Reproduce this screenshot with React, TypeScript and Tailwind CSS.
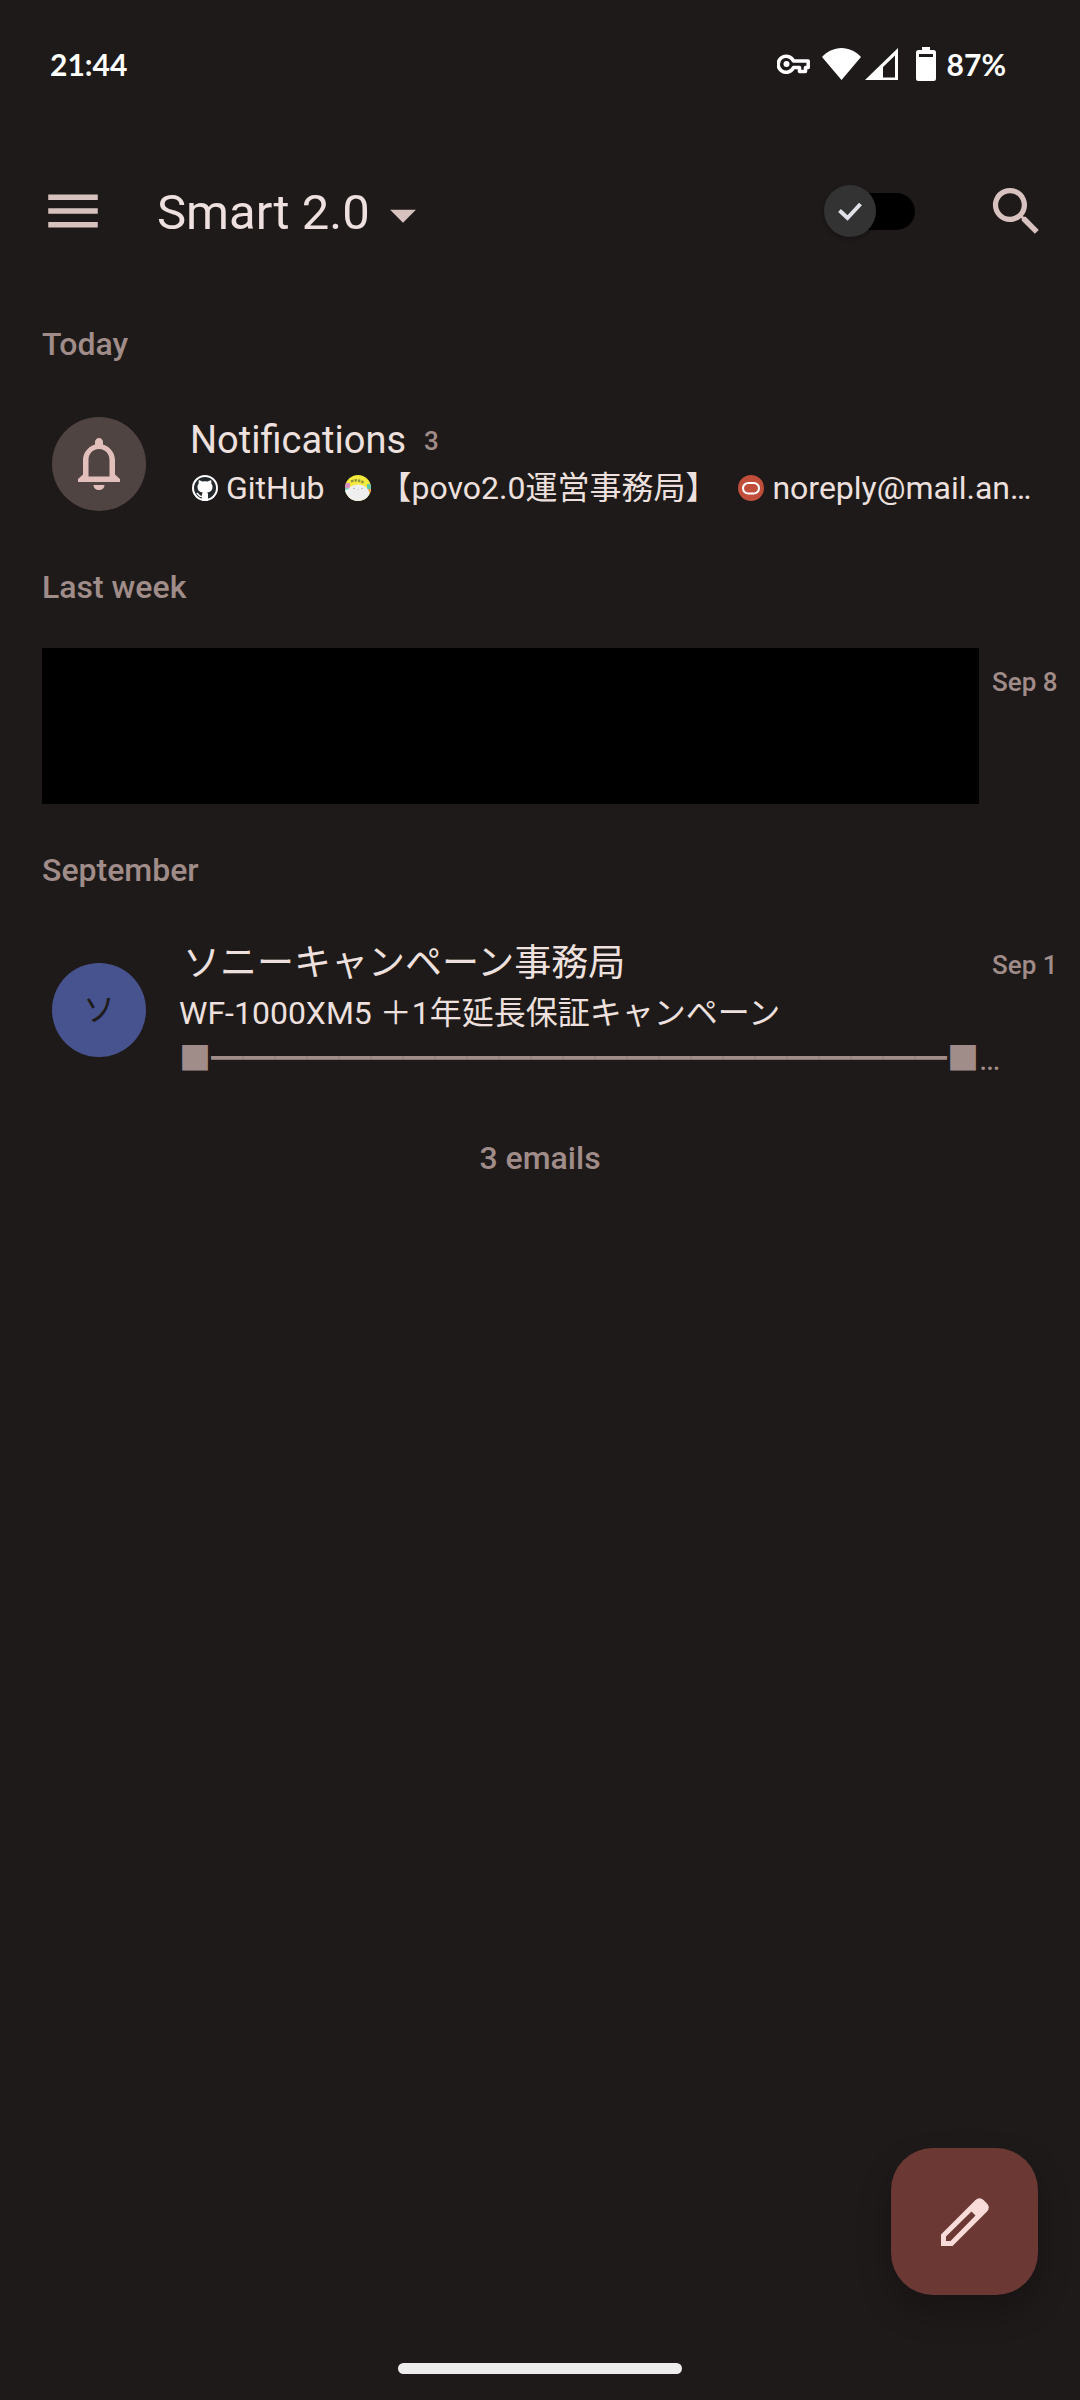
import { useState } from "react";
import type { ReactNode } from "react";
import { MdArrowDropDown, MdMenu, MdSearch } from "react-icons/md";

const SNIPPET = "■" + "━".repeat(23) + "■…";

function StatusBar() {
  return (
    <div className="flex h-32 items-center justify-between pl-[50px] pr-[74px] font-['Lato'] text-[30px] leading-10 font-bold text-white">
      <time>21:44</time>
      <div className="flex items-center">
        <svg className="mr-3 h-5 w-[33px]" viewBox="0 0 33 20" fill="none" stroke="currentColor" aria-label="VPN">
          <path
            strokeWidth="3.500"
            strokeLinejoin="round"
            d="M16.500 7H31.200v6.500h-2.700v4h-6v-4h-6A8 8 0 1 1 16.500 7z"
          />
          <circle cx="9.500" cy="10" r="3" fill="currentColor" stroke="none" />
        </svg>
        <svg className="mr-1 h-8 w-[39px]" viewBox="0 0 39 32" fill="currentColor" aria-label="Wi-Fi">
          <path d="M19.500 32 0 9C5 3.500 12 0 19.500 0S34 3.500 39 9z" />
        </svg>
        <svg className="mr-[18px] h-8 w-[33px]" viewBox="0 0 33 32" fill="currentColor" aria-label="Mobile signal">
          <path fillRule="evenodd" d="M33 0v32H0zM30 7.500 18 19v10.500h12z" />
        </svg>
        <svg className="mr-[11px] h-[34px] w-5" viewBox="0 0 20 34" fill="currentColor" aria-label="Battery">
          <path fillRule="evenodd" d="M6 0h8v3h3.500Q20 3 20 5.500v26Q20 34 17.500 34h-15Q0 34 0 31.500v-26Q0 3 2.500 3H6zM3 7v3h14V7z" />
        </svg>
        <span>87%</span>
      </div>
    </div>
  );
}

function UnreadSwitch() {
  const [on, setOn] = useState(false);
  return (
    <label className="relative flex h-[52px] w-[91px] cursor-pointer items-center justify-end">
      <input
        type="checkbox"
        role="switch"
        aria-label="Show done emails"
        className="peer sr-only"
        checked={on}
        onChange={(e) => setOn(e.target.checked)}
      />
      <span className="h-[37px] w-[74px] rounded-full bg-black" />
      <span className="absolute left-0 flex size-[52px] items-center justify-center rounded-full bg-[#333333] shadow-[0_2px_4px_rgba(0,0,0,0.3)] peer-checked:left-auto peer-checked:right-0">
        <svg className="h-[19px] w-6" viewBox="0 0 24 19" fill="none" stroke="#dfe1e8" strokeWidth="4">
          <path d="M1.500 8.500 9.500 16 22.500 2" />
        </svg>
      </span>
    </label>
  );
}

function TopBar() {
  return (
    <header className="flex h-[166px] items-center pl-10 pr-8 text-[#d8c2bf]">
      <button type="button" aria-label="Open menu">
        <MdMenu className="size-[66px]" />
      </button>
      <button type="button" className="mt-1 ml-[51px] flex items-center gap-[2px] text-[49px] leading-[60px]">
        <span className="text-[#ede0de]">Smart 2.0</span>
        <MdArrowDropDown className="mt-1 size-[62px]" />
      </button>
      <div className="ml-auto flex items-center gap-[70px]">
        <UnreadSwitch />
        <button type="button" aria-label="Search">
          <MdSearch className="size-[63px]" />
        </button>
      </div>
    </header>
  );
}

function SectionTitle({ children }: { children: ReactNode }) {
  return <h2 className="px-[42px] text-[32px] leading-10 font-medium text-[#a08c89]">{children}</h2>;
}

function GitHubAvatar() {
  return (
    <svg className="size-[26px] shrink-0" viewBox="0 0 26 26" aria-hidden="true">
      <circle cx="13" cy="13" r="13" fill="#fff" />
      <circle cx="13" cy="13" r="11" fill="#24292e" />
      <path
        fill="#fff"
        d="M10 26v-6.500c0-.9.300-1.600.800-2.100-3-.400-5.300-1.800-5.300-5.700 0-1.400.500-2.400 1.200-3.200-.200-.900-.200-2 .200-3.200 1.200 0 2.300.600 3.300 1.300a11 11 0 0 1 5.600 0c1-.700 2.100-1.300 3.300-1.300.400 1.200.400 2.300.200 3.200.700.800 1.200 1.800 1.200 3.200 0 3.900-2.300 5.300-5.300 5.700.500.500.800 1.200.800 2.100V26z"
      />
      <path d="M10.500 21.500c-3 .600-3.500-1.300-4.300-2.200-.5-.5-1-.8-1.500-1" fill="none" stroke="#fff" strokeWidth="1.500" />
    </svg>
  );
}

function PovoAvatar() {
  return (
    <svg className="size-[26px] shrink-0" viewBox="0 0 26 26" aria-hidden="true">
      <defs>
        <clipPath id="povo-round">
          <circle cx="13" cy="13" r="13" />
        </clipPath>
      </defs>
      <g clipPath="url(#povo-round)">
        <rect width="26" height="26" fill="#f5ea3c" />
        <rect y="8" width="5" height="5" fill="#d98fc4" />
        <rect y="13" width="5" height="5" fill="#79d3c0" />
        <rect x="22" y="9" width="4" height="5" fill="#5fc6b0" />
        <rect x="22" y="14" width="4" height="4" fill="#f0a04a" />
        <path d="M6 6.500q7-3 13 1.500" stroke="#8f9440" strokeWidth="2.500" strokeDasharray="2.500 1" fill="none" />
        <path d="M2 26C-1 16 5 9.500 13 9.500s14 6.500 11 16.500z" fill="#efefef" />
        <circle cx="2.500" cy="17" r="2.500" fill="#f3f3f3" />
        <circle cx="9" cy="13.500" r=".7" fill="#999" />
        <circle cx="17" cy="13.500" r=".7" fill="#999" />
        <circle cx="13" cy="14.500" r=".5" fill="#aaa" />
      </g>
    </svg>
  );
}

function OracleAvatar() {
  return (
    <svg className="size-[26px] shrink-0" viewBox="0 0 26 26" aria-hidden="true">
      <circle cx="13" cy="13" r="13" fill="#c04e3b" />
      <rect x="5" y="8" width="16" height="10.500" rx="5.250" fill="none" stroke="#fff" strokeWidth="2" />
    </svg>
  );
}

function BellIcon() {
  return (
    <svg className="h-[52px] w-[42px]" viewBox="0 0 42 52" aria-hidden="true">
      <path
        fill="#e2bfbb"
        fillRule="evenodd"
        d="M21 0c2.200 0 4 1.800 4 4v2.500C32 8.500 37 15 37 22v14.500l5 4.500v3H0v-3l5-4.500V22C5 15 10 8.500 17 6.500V4c0-2.200 1.800-4 4-4zM21 11c-6.500 0-10.500 5-10.500 11v16.500h21V22c0-6-4-11-10.500-11zM15.500 47h11c0 3-2.500 5-5.500 5s-5.500-2-5.500-5z"
      />
    </svg>
  );
}

function Sender({ icon, children }: { icon: ReactNode; children: ReactNode }) {
  return (
    <span className="flex shrink-0 items-center gap-2">
      {icon}
      {children}
    </span>
  );
}

export default function App() {
  return (
    <div
      lang="ja"
      className="flex min-h-screen flex-col bg-[#1e1a19] font-['Roboto','Noto_Sans_CJK_JP',sans-serif] text-[#ede0de]"
    >
      <StatusBar />
      <TopBar />

      <main className="flex flex-col pt-[30px]">
        <SectionTitle>Today</SectionTitle>
        <article className="mt-[50px] flex h-[100px] items-center pl-[52px] pr-12">
          <div className="flex size-[94px] shrink-0 items-center justify-center rounded-full bg-[#504442]">
            <BellIcon />
          </div>
          <div className="ml-[44px] min-w-0 flex-1">
            <div className="flex items-center gap-[18px]">
              <h3 className="text-[38px] leading-[48px]">Notifications</h3>
              <span className="mt-[2px] text-[26px] leading-8 font-medium text-[#a08c89]">3</span>
            </div>
            <div className="flex items-center gap-[21px] pl-[2px] text-[32px] leading-[48px] whitespace-nowrap">
              <Sender icon={<GitHubAvatar />}>GitHub</Sender>
              <Sender icon={<PovoAvatar />}>【povo2.0運営事務局】</Sender>
              <Sender icon={<OracleAvatar />}>noreply@mail.an…</Sender>
            </div>
          </div>
        </article>

        <div className="mt-[53px]">
          <SectionTitle>Last week</SectionTitle>
        </div>
        <article className="mt-[41px] flex items-start pl-[42px] pr-[22px]">
          <div className="h-[156px] flex-1 bg-black" />
          <time className="mt-[18px] ml-[13px] w-[66px] text-[26px] leading-8 font-medium whitespace-nowrap text-[#a08c89]">Sep 8</time>
        </article>

        <div className="mt-[46px]">
          <SectionTitle>September</SectionTitle>
        </div>
        <article className="mt-12 flex items-start pl-[52px] pr-[22px]">
          <div className="mt-[25px] flex size-[94px] shrink-0 items-center justify-center rounded-full bg-[#47538f] text-[32px] leading-10 text-[#1f1b1a]">
            ソ
          </div>
          <div className="ml-[33px] min-w-0 flex-1">
            <div className="flex items-center justify-between pl-1">
              <h3 className="text-[37px] leading-[52px]">ソニーキャンペーン事務局</h3>
              <time className="mt-[2px] w-[66px] text-[26px] leading-8 font-medium whitespace-nowrap text-[#a08c89]">Sep 1</time>
            </div>
            <p className="text-[32px] leading-[46px]">WF-1000XM5 ＋1年延長保証キャンペーン</p>
            <p className="text-[32px] leading-[46px] whitespace-nowrap text-[#a08c89]">{SNIPPET}</p>
          </div>
        </article>

        <p className="mt-14 text-center text-[32px] leading-10 font-medium text-[#a08c89]">3 emails</p>
      </main>

      <button
        type="button"
        aria-label="Compose"
        className="fixed right-[42px] bottom-[105px] flex size-[147px] items-center justify-center rounded-[42px] bg-[#6b3834] shadow-[0_16px_32px_rgba(0,0,0,0.25)]"
      >
        <svg className="size-12" viewBox="0 0 48 48" aria-hidden="true">
          <path
            fill="#f9dcd9"
            fillRule="evenodd"
            d="M0 48V36.500L34.500 2q4-3.500 8 0l3.500 3.500q3.500 4 0 8L11.500 48zM5 43h4.500L34.500 17.500 30.500 13.500 5 38.500z"
          />
        </svg>
      </button>

      <div className="mx-auto mt-auto mb-[26px] h-[11px] w-[284px] rounded-full bg-[#ececec]" />
    </div>
  );
}
